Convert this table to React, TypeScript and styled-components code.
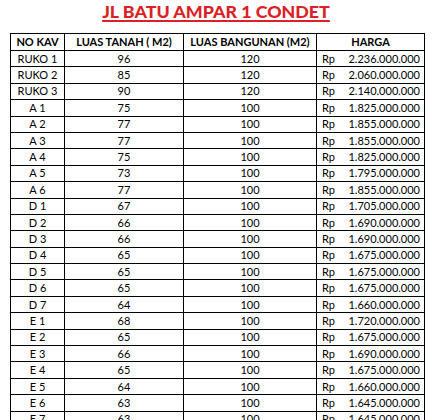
import React from 'react';
import styled, { createGlobalStyle } from 'styled-components';

type Kavling = {
    kav: string;
    tanah: number;
    bangunan: number;
    harga: string;
};

const kavlings: Kavling[] = [
    { kav: 'RUKO 1', tanah: 96, bangunan: 120, harga: '2.236.000.000' },
    { kav: 'RUKO 2', tanah: 85, bangunan: 120, harga: '2.060.000.000' },
    { kav: 'RUKO 3', tanah: 90, bangunan: 120, harga: '2.140.000.000' },
    { kav: 'A 1', tanah: 75, bangunan: 100, harga: '1.825.000.000' },
    { kav: 'A 2', tanah: 77, bangunan: 100, harga: '1.855.000.000' },
    { kav: 'A 3', tanah: 77, bangunan: 100, harga: '1.855.000.000' },
    { kav: 'A 4', tanah: 75, bangunan: 100, harga: '1.825.000.000' },
    { kav: 'A 5', tanah: 73, bangunan: 100, harga: '1.795.000.000' },
    { kav: 'A 6', tanah: 77, bangunan: 100, harga: '1.855.000.000' },
    { kav: 'D 1', tanah: 67, bangunan: 100, harga: '1.705.000.000' },
    { kav: 'D 2', tanah: 66, bangunan: 100, harga: '1.690.000.000' },
    { kav: 'D 3', tanah: 66, bangunan: 100, harga: '1.690.000.000' },
    { kav: 'D 4', tanah: 65, bangunan: 100, harga: '1.675.000.000' },
    { kav: 'D 5', tanah: 65, bangunan: 100, harga: '1.675.000.000' },
    { kav: 'D 6', tanah: 65, bangunan: 100, harga: '1.675.000.000' },
    { kav: 'D 7', tanah: 64, bangunan: 100, harga: '1.660.000.000' },
    { kav: 'E 1', tanah: 68, bangunan: 100, harga: '1.720.000.000' },
    { kav: 'E 2', tanah: 65, bangunan: 100, harga: '1.675.000.000' },
    { kav: 'E 3', tanah: 66, bangunan: 100, harga: '1.690.000.000' },
    { kav: 'E 4', tanah: 65, bangunan: 100, harga: '1.675.000.000' },
    { kav: 'E 5', tanah: 64, bangunan: 100, harga: '1.660.000.000' },
    { kav: 'E 6', tanah: 63, bangunan: 100, harga: '1.645.000.000' },
    { kav: 'E 7', tanah: 63, bangunan: 100, harga: '1.645.000.000' },
];

const GlobalStyle = createGlobalStyle`
    html, body {
        margin: 0;
        padding: 0;
        background: #ffffff;
        overflow: hidden;
    }
    body {
        font-family: Lato, "Open Sans", sans-serif;
        color: #000000;
    }
`

const Sheet = styled.main`
    width: 432px;
    height: 420px;
    overflow: hidden;
    padding-top: 2px;
    box-sizing: border-box;
`

const Title = styled.h1`
    margin: 0 0 13px;
    height: 18px;
    line-height: 18px;
    text-align: center;
    font-size: 17.8px;
    font-weight: 900;
    color: #dd1f26;
    text-decoration: underline;
    text-decoration-thickness: 2px;
    text-underline-offset: 2px;
`

const Table = styled.table`
    margin-left: 10px;
    width: 411px;
    border-collapse: collapse;
    table-layout: fixed;
    font-size: 11px;
`

const HeadCell = styled.th<{ $w: number }>`
    width: ${p => p.$w}px;
    height: 16px;
    padding: 0;
    border: 1px solid #000;
    font-weight: 700;
    text-align: center;
    line-height: 14px;
`

const Row = styled.tr`
    height: 16.4px;
`

const Cell = styled.td`
    padding: 0;
    border: 1px solid #000;
    text-align: center;
    line-height: 14px;
    white-space: nowrap;
`

const PriceCell = styled(Cell)`
    padding: 0 4px 0 5px;
`

const Price = styled.div`
    display: flex;
    justify-content: space-between;
`

const App: React.FC = () => {
    return (
        <Sheet>
            <GlobalStyle />
            <Title>JL BATU AMPAR 1 CONDET</Title>
            <Table>
                <thead>
                    <tr>
                        <HeadCell $w={53}>NO KAV</HeadCell>
                        <HeadCell $w={118}>LUAS TANAH ( M2)</HeadCell>
                        <HeadCell $w={132}>LUAS BANGUNAN (M2)</HeadCell>
                        <HeadCell $w={107}>HARGA</HeadCell>
                    </tr>
                </thead>
                <tbody>
                    {kavlings.map(k => (
                        <Row key={k.kav}>
                            <Cell>{k.kav}</Cell>
                            <Cell>{k.tanah}</Cell>
                            <Cell>{k.bangunan}</Cell>
                            <PriceCell>
                                <Price>
                                    <span>Rp</span>
                                    <span>{k.harga}</span>
                                </Price>
                            </PriceCell>
                        </Row>
                    ))}
                </tbody>
            </Table>
        </Sheet>
    );
};

export default App;
